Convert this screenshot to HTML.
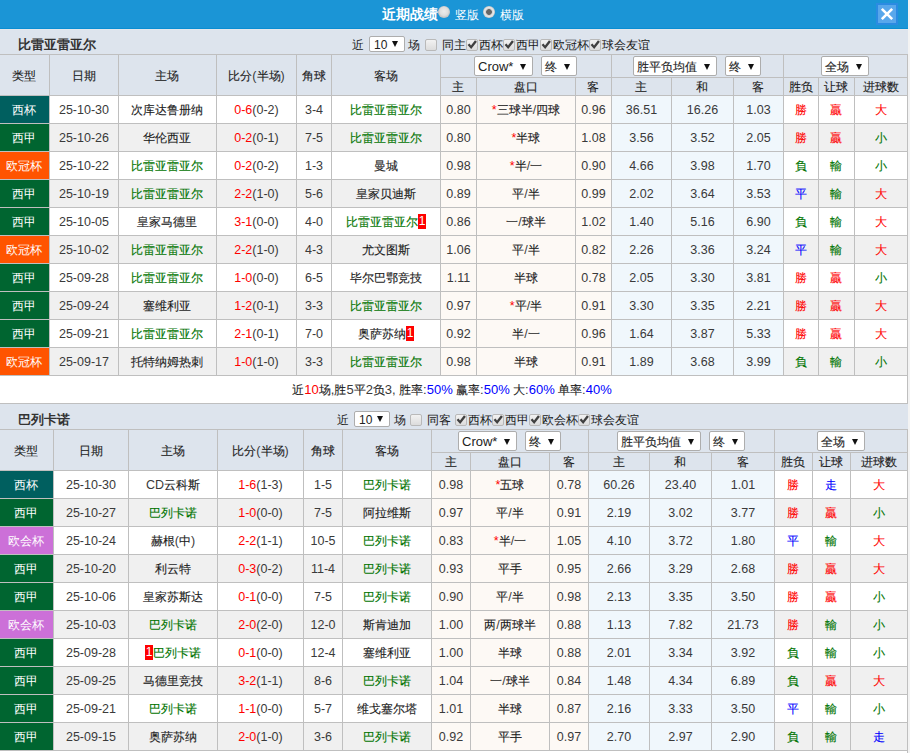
<!DOCTYPE html><html><head><meta charset="utf-8"><title>近期战绩</title><style>
html,body{margin:0;padding:0;}
body{width:910px;height:753px;overflow:hidden;position:relative;background:#f3f3f3;font-family:"Liberation Sans",sans-serif;font-size:12px;color:#333;}
.a{position:absolute;}
.c{position:absolute;text-align:center;white-space:nowrap;overflow:hidden;color:#1c1c1c;}
.z{-webkit-text-stroke:0.12px currentColor;}
.ty .z{-webkit-text-stroke:0;}
.n{font-size:12.5px;}
.c > .n{color:#3a3a3a;}
.sum .n{font-size:13px;}
.sel .n{font-size:13px;}
.t{position:absolute;white-space:nowrap;color:#1a1a1a;}
.sel{position:absolute;background:#fff;border:1px solid #adadad;border-radius:2px;white-space:nowrap;color:#222;font-size:12px;}
.sel .st{position:absolute;left:3px;top:1px;}
.sel .ar{position:absolute;right:6px;top:6.5px;width:0;height:0;border-left:3.5px solid transparent;border-right:3.5px solid transparent;border-top:6px solid #111;}
.s10 .ar{top:4px;}
.s10 .n{font-size:12px;}
.cb{position:absolute;width:10px;height:10px;border:1px solid #b9b9b9;border-radius:2px;background:linear-gradient(#f2f2f2,#dcdcdc);}
.ck{position:absolute;left:0;top:0;}
.rc{display:inline-block;background:#ff0000;color:#fff;width:8px;height:15px;line-height:15px;text-align:center;vertical-align:1px;}
.rc .n{font-size:12px;}

</style></head><body>
<div class="a" style="left:0px;top:0px;width:908px;height:753px;background:#ffffff;">
</div>
<div class="a" style="left:0px;top:0px;width:908px;height:28px;background:#1b95d6;">
</div>
<div class="a" style="left:0px;top:28px;width:908px;height:1px;background:#0a8dd2"></div>
<div class="t" style="left:382px;top:6px;color:#fff;font-weight:bold;font-size:14px;line-height:16px;">近期战绩</div>
<div class="a radio" style="left:438px;top:6px;width:12px;height:12px;border-radius:50%;background:radial-gradient(circle at 50% 45%,#ececec 0,#dedede 4px,#c4c4c4 6px);"></div>
<div class="t" style="left:455px;top:9px;color:#fff;font-size:12px;line-height:13px;">竖版</div>
<div class="a radio" style="left:483px;top:6px;width:12px;height:12px;border-radius:50%;background:radial-gradient(circle,#666 0,#666 2.5px,#d0d0d0 3.2px,#e8e8e8 4.5px,#c4c4c4 6px);"></div>
<div class="t" style="left:500px;top:9px;color:#fff;font-size:12px;line-height:13px;">横版</div>
<div class="a" style="left:876px;top:3px;width:22px;height:22px;background:#2b8be2;">
</div>
<div class="a" style="left:878px;top:5px;width:18px;height:18px;background:#59a7eb;">
</div>
<svg class="a" style="left:876px;top:3px" width="22" height="22" viewBox="0 0 22 22"><path d="M5.8 5.8L16.2 16.2M16.2 5.8L5.8 16.2" stroke="#fff" stroke-width="2.6"/></svg>
<div class="a" style="left:0px;top:29px;width:908px;height:1px;background:#e4e7ec"></div>
<div class="a" style="left:0px;top:30px;width:908px;height:24px;background:#dde4ed;">
</div>
<div class="t" style="left:18px;top:38px;font-weight:bold;font-size:13px;line-height:14px;color:#333;">比雷亚雷亚尔</div>
<div class="t" style="left:352px;top:38px;line-height:14px;">近</div>
<div class="sel s10" style="left:369px;top:36px;width:34px;height:14px;line-height:14px;"><span class="st" style="left:4px">10</span><span class="ar"></span></div>
<div class="t" style="left:408px;top:38px;line-height:14px;">场</div>
<div class="cb" style="left:425px;top:39px;"></div>
<div class="t" style="left:442px;top:38px;line-height:14px;">同主</div>
<div class="cb" style="left:466px;top:39px;"><svg class="ck" width="10" height="10" viewBox="0 0 10 10"><path d="M0.6 5.0 L2.4 3.4 L4.0 5.4 L8.0 0.2 L9.9 1.7 L4.2 9.0 Z" fill="#404040"/></svg></div>
<div class="t" style="left:479px;top:38px;line-height:14px;">西杯</div>
<div class="cb" style="left:503px;top:39px;"><svg class="ck" width="10" height="10" viewBox="0 0 10 10"><path d="M0.6 5.0 L2.4 3.4 L4.0 5.4 L8.0 0.2 L9.9 1.7 L4.2 9.0 Z" fill="#404040"/></svg></div>
<div class="t" style="left:516px;top:38px;line-height:14px;">西甲</div>
<div class="cb" style="left:540px;top:39px;"><svg class="ck" width="10" height="10" viewBox="0 0 10 10"><path d="M0.6 5.0 L2.4 3.4 L4.0 5.4 L8.0 0.2 L9.9 1.7 L4.2 9.0 Z" fill="#404040"/></svg></div>
<div class="t" style="left:553px;top:38px;line-height:14px;">欧冠杯</div>
<div class="cb" style="left:589px;top:39px;"><svg class="ck" width="10" height="10" viewBox="0 0 10 10"><path d="M0.6 5.0 L2.4 3.4 L4.0 5.4 L8.0 0.2 L9.9 1.7 L4.2 9.0 Z" fill="#404040"/></svg></div>
<div class="t" style="left:602px;top:38px;line-height:14px;">球会友谊</div>
<div class="a" style="left:0px;top:54px;width:908px;height:322px;background:#bfbfbf;">
</div>
<div class="c" style="left:0px;top:55px;width:48px;padding-right:1px;height:40px;line-height:42px;background:#dde4ed;"><span class="z">类型</span></div>
<div class="c" style="left:50px;top:55px;width:68px;padding-right:0px;height:40px;line-height:42px;background:#dde4ed;"><span class="z">日期</span></div>
<div class="c" style="left:119px;top:55px;width:96px;padding-right:1px;height:40px;line-height:42px;background:#dde4ed;"><span class="z">主场</span></div>
<div class="c" style="left:217px;top:55px;width:79px;padding-right:0px;height:40px;line-height:42px;background:#dde4ed;"><span class="z">比分</span><span class="n">(</span><span class="z">半场</span><span class="n">)</span></div>
<div class="c" style="left:297px;top:55px;width:34px;padding-right:0px;height:40px;line-height:42px;background:#dde4ed;"><span class="z">角球</span></div>
<div class="c" style="left:332px;top:55px;width:108px;padding-right:0px;height:40px;line-height:42px;background:#dde4ed;"><span class="z">客场</span></div>
<div class="c" style="left:441px;top:55px;width:170px;padding-right:0px;height:22px;line-height:24px;background:#dde4ed;"></div>
<div class="c" style="left:612px;top:55px;width:171px;padding-right:0px;height:22px;line-height:24px;background:#dde4ed;"></div>
<div class="c" style="left:784px;top:55px;width:123px;padding-right:0px;height:22px;line-height:24px;background:#dde4ed;"></div>
<div class="c" style="left:441px;top:78px;width:34px;padding-right:1px;height:17px;line-height:19px;background:#dde4ed;line-height:19px;"><span class="z">主</span></div>
<div class="c" style="left:477px;top:78px;width:98px;padding-right:0px;height:17px;line-height:19px;background:#dde4ed;line-height:19px;"><span class="z">盘口</span></div>
<div class="c" style="left:576px;top:78px;width:34px;padding-right:1px;height:17px;line-height:19px;background:#dde4ed;line-height:19px;"><span class="z">客</span></div>
<div class="c" style="left:612px;top:78px;width:58px;padding-right:1px;height:17px;line-height:19px;background:#dde4ed;line-height:19px;"><span class="z">主</span></div>
<div class="c" style="left:672px;top:78px;width:60px;padding-right:1px;height:17px;line-height:19px;background:#dde4ed;line-height:19px;"><span class="z">和</span></div>
<div class="c" style="left:734px;top:78px;width:48px;padding-right:1px;height:17px;line-height:19px;background:#dde4ed;line-height:19px;"><span class="z">客</span></div>
<div class="c" style="left:784px;top:78px;width:34px;padding-right:0px;height:17px;line-height:19px;background:#dde4ed;line-height:19px;"><span class="z">胜负</span></div>
<div class="c" style="left:819px;top:78px;width:34px;padding-right:1px;height:17px;line-height:19px;background:#dde4ed;line-height:19px;"><span class="z">让球</span></div>
<div class="c" style="left:855px;top:78px;width:52px;padding-right:0px;height:17px;line-height:19px;background:#dde4ed;line-height:19px;"><span class="z">进球数</span></div>
<div class="sel" style="left:474px;top:56px;width:57px;height:18px;line-height:18px;"><span class="st"><span class="n">Crow*</span></span><span class="ar"></span></div>
<div class="sel" style="left:541px;top:56px;width:34px;height:18px;line-height:18px;"><span class="st"><span class="z">终</span></span><span class="ar"></span></div>
<div class="sel" style="left:633px;top:56px;width:82px;height:18px;line-height:18px;"><span class="st"><span class="z">胜平负均值</span></span><span class="ar"></span></div>
<div class="sel" style="left:725px;top:56px;width:34px;height:18px;line-height:18px;"><span class="st"><span class="z">终</span></span><span class="ar"></span></div>
<div class="sel" style="left:821px;top:56px;width:46px;height:18px;line-height:18px;"><span class="st"><span class="z">全场</span></span><span class="ar"></span></div>
<div class="c ty" style="left:0px;top:96px;width:48px;padding-right:1px;height:27px;line-height:29px;background:#005f5f;color:#ffffff;"><span class="z">西杯</span></div>
<div class="c" style="left:50px;top:96px;width:68px;padding-right:0px;height:27px;line-height:29px;background:#ffffff;"><span class="n">25-10-30</span></div>
<div class="c" style="left:119px;top:96px;width:96px;padding-right:1px;height:27px;line-height:29px;background:#ffffff;"><span class="z">次库达鲁册纳</span></div>
<div class="c" style="left:217px;top:96px;width:79px;padding-right:0px;height:27px;line-height:29px;background:#ffffff;"><span style="color:#ff0000"><span class="n">0-6</span></span><span class="n">(0-2)</span></div>
<div class="c" style="left:297px;top:96px;width:34px;padding-right:0px;height:27px;line-height:29px;background:#ffffff;"><span class="n">3-4</span></div>
<div class="c" style="left:332px;top:96px;width:108px;padding-right:0px;height:27px;line-height:29px;background:#ffffff;"><span style="color:#007400"><span class="z">比雷亚雷亚尔</span></span></div>
<div class="c" style="left:441px;top:96px;width:35px;padding-right:0px;height:27px;line-height:29px;background:#fdf9f5;"><span class="n">0.80</span></div>
<div class="c" style="left:477px;top:96px;width:98px;padding-right:0px;height:27px;line-height:29px;background:#fdf9f5;"><span style="color:#ff0000"><span class="n">*</span></span><span class="z">三球半</span><span class="n">/</span><span class="z">四球</span></div>
<div class="c" style="left:576px;top:96px;width:35px;padding-right:0px;height:27px;line-height:29px;background:#fdf9f5;"><span class="n">0.96</span></div>
<div class="c" style="left:612px;top:96px;width:59px;padding-right:0px;height:27px;line-height:29px;background:#f0f7fc;"><span class="n">36.51</span></div>
<div class="c" style="left:672px;top:96px;width:61px;padding-right:0px;height:27px;line-height:29px;background:#f0f7fc;"><span class="n">16.26</span></div>
<div class="c" style="left:734px;top:96px;width:49px;padding-right:0px;height:27px;line-height:29px;background:#f0f7fc;"><span class="n">1.03</span></div>
<div class="c" style="left:784px;top:96px;width:34px;padding-right:0px;height:27px;line-height:29px;background:#ffffff;color:#ff0000;-webkit-text-stroke:0.15px currentColor;"><span class="z">勝</span></div>
<div class="c" style="left:819px;top:96px;width:34px;padding-right:1px;height:27px;line-height:29px;background:#ffffff;color:#ff0000;-webkit-text-stroke:0.15px currentColor;"><span class="z">贏</span></div>
<div class="c" style="left:855px;top:96px;width:52px;padding-right:0px;height:27px;line-height:29px;background:#ffffff;color:#ff0000;-webkit-text-stroke:0.15px currentColor;"><span class="z">大</span></div>
<div class="c ty" style="left:0px;top:124px;width:48px;padding-right:1px;height:27px;line-height:29px;background:#006530;color:#ffffff;"><span class="z">西甲</span></div>
<div class="c" style="left:50px;top:124px;width:68px;padding-right:0px;height:27px;line-height:29px;background:#f0f0f0;"><span class="n">25-10-26</span></div>
<div class="c" style="left:119px;top:124px;width:96px;padding-right:1px;height:27px;line-height:29px;background:#f0f0f0;"><span class="z">华伦西亚</span></div>
<div class="c" style="left:217px;top:124px;width:79px;padding-right:0px;height:27px;line-height:29px;background:#f0f0f0;"><span style="color:#ff0000"><span class="n">0-2</span></span><span class="n">(0-1)</span></div>
<div class="c" style="left:297px;top:124px;width:34px;padding-right:0px;height:27px;line-height:29px;background:#f0f0f0;"><span class="n">7-5</span></div>
<div class="c" style="left:332px;top:124px;width:108px;padding-right:0px;height:27px;line-height:29px;background:#f0f0f0;"><span style="color:#007400"><span class="z">比雷亚雷亚尔</span></span></div>
<div class="c" style="left:441px;top:124px;width:35px;padding-right:0px;height:27px;line-height:29px;background:#fdf9f5;"><span class="n">0.80</span></div>
<div class="c" style="left:477px;top:124px;width:98px;padding-right:0px;height:27px;line-height:29px;background:#fdf9f5;"><span style="color:#ff0000"><span class="n">*</span></span><span class="z">半球</span></div>
<div class="c" style="left:576px;top:124px;width:35px;padding-right:0px;height:27px;line-height:29px;background:#fdf9f5;"><span class="n">1.08</span></div>
<div class="c" style="left:612px;top:124px;width:59px;padding-right:0px;height:27px;line-height:29px;background:#f0f7fc;"><span class="n">3.56</span></div>
<div class="c" style="left:672px;top:124px;width:61px;padding-right:0px;height:27px;line-height:29px;background:#f0f7fc;"><span class="n">3.52</span></div>
<div class="c" style="left:734px;top:124px;width:49px;padding-right:0px;height:27px;line-height:29px;background:#f0f7fc;"><span class="n">2.05</span></div>
<div class="c" style="left:784px;top:124px;width:34px;padding-right:0px;height:27px;line-height:29px;background:#f0f0f0;color:#ff0000;-webkit-text-stroke:0.15px currentColor;"><span class="z">勝</span></div>
<div class="c" style="left:819px;top:124px;width:34px;padding-right:1px;height:27px;line-height:29px;background:#f0f0f0;color:#ff0000;-webkit-text-stroke:0.15px currentColor;"><span class="z">贏</span></div>
<div class="c" style="left:855px;top:124px;width:52px;padding-right:0px;height:27px;line-height:29px;background:#f0f0f0;color:#007400;-webkit-text-stroke:0.15px currentColor;"><span class="z">小</span></div>
<div class="c ty" style="left:0px;top:152px;width:48px;padding-right:1px;height:27px;line-height:29px;background:#ff5400;color:#ffffff;"><span class="z">欧冠杯</span></div>
<div class="c" style="left:50px;top:152px;width:68px;padding-right:0px;height:27px;line-height:29px;background:#ffffff;"><span class="n">25-10-22</span></div>
<div class="c" style="left:119px;top:152px;width:96px;padding-right:1px;height:27px;line-height:29px;background:#ffffff;"><span style="color:#007400"><span class="z">比雷亚雷亚尔</span></span></div>
<div class="c" style="left:217px;top:152px;width:79px;padding-right:0px;height:27px;line-height:29px;background:#ffffff;"><span style="color:#ff0000"><span class="n">0-2</span></span><span class="n">(0-2)</span></div>
<div class="c" style="left:297px;top:152px;width:34px;padding-right:0px;height:27px;line-height:29px;background:#ffffff;"><span class="n">1-3</span></div>
<div class="c" style="left:332px;top:152px;width:108px;padding-right:0px;height:27px;line-height:29px;background:#ffffff;"><span class="z">曼城</span></div>
<div class="c" style="left:441px;top:152px;width:35px;padding-right:0px;height:27px;line-height:29px;background:#fdf9f5;"><span class="n">0.98</span></div>
<div class="c" style="left:477px;top:152px;width:98px;padding-right:0px;height:27px;line-height:29px;background:#fdf9f5;"><span style="color:#ff0000"><span class="n">*</span></span><span class="z">半</span><span class="n">/</span><span class="z">一</span></div>
<div class="c" style="left:576px;top:152px;width:35px;padding-right:0px;height:27px;line-height:29px;background:#fdf9f5;"><span class="n">0.90</span></div>
<div class="c" style="left:612px;top:152px;width:59px;padding-right:0px;height:27px;line-height:29px;background:#f0f7fc;"><span class="n">4.66</span></div>
<div class="c" style="left:672px;top:152px;width:61px;padding-right:0px;height:27px;line-height:29px;background:#f0f7fc;"><span class="n">3.98</span></div>
<div class="c" style="left:734px;top:152px;width:49px;padding-right:0px;height:27px;line-height:29px;background:#f0f7fc;"><span class="n">1.70</span></div>
<div class="c" style="left:784px;top:152px;width:34px;padding-right:0px;height:27px;line-height:29px;background:#ffffff;color:#007400;-webkit-text-stroke:0.15px currentColor;"><span class="z">負</span></div>
<div class="c" style="left:819px;top:152px;width:34px;padding-right:1px;height:27px;line-height:29px;background:#ffffff;color:#007400;-webkit-text-stroke:0.15px currentColor;"><span class="z">輸</span></div>
<div class="c" style="left:855px;top:152px;width:52px;padding-right:0px;height:27px;line-height:29px;background:#ffffff;color:#007400;-webkit-text-stroke:0.15px currentColor;"><span class="z">小</span></div>
<div class="c ty" style="left:0px;top:180px;width:48px;padding-right:1px;height:27px;line-height:29px;background:#006530;color:#ffffff;"><span class="z">西甲</span></div>
<div class="c" style="left:50px;top:180px;width:68px;padding-right:0px;height:27px;line-height:29px;background:#f0f0f0;"><span class="n">25-10-19</span></div>
<div class="c" style="left:119px;top:180px;width:96px;padding-right:1px;height:27px;line-height:29px;background:#f0f0f0;"><span style="color:#007400"><span class="z">比雷亚雷亚尔</span></span></div>
<div class="c" style="left:217px;top:180px;width:79px;padding-right:0px;height:27px;line-height:29px;background:#f0f0f0;"><span style="color:#ff0000"><span class="n">2-2</span></span><span class="n">(1-0)</span></div>
<div class="c" style="left:297px;top:180px;width:34px;padding-right:0px;height:27px;line-height:29px;background:#f0f0f0;"><span class="n">5-6</span></div>
<div class="c" style="left:332px;top:180px;width:108px;padding-right:0px;height:27px;line-height:29px;background:#f0f0f0;"><span class="z">皇家贝迪斯</span></div>
<div class="c" style="left:441px;top:180px;width:35px;padding-right:0px;height:27px;line-height:29px;background:#fdf9f5;"><span class="n">0.89</span></div>
<div class="c" style="left:477px;top:180px;width:98px;padding-right:0px;height:27px;line-height:29px;background:#fdf9f5;"><span class="z">平</span><span class="n">/</span><span class="z">半</span></div>
<div class="c" style="left:576px;top:180px;width:35px;padding-right:0px;height:27px;line-height:29px;background:#fdf9f5;"><span class="n">0.99</span></div>
<div class="c" style="left:612px;top:180px;width:59px;padding-right:0px;height:27px;line-height:29px;background:#f0f7fc;"><span class="n">2.02</span></div>
<div class="c" style="left:672px;top:180px;width:61px;padding-right:0px;height:27px;line-height:29px;background:#f0f7fc;"><span class="n">3.64</span></div>
<div class="c" style="left:734px;top:180px;width:49px;padding-right:0px;height:27px;line-height:29px;background:#f0f7fc;"><span class="n">3.53</span></div>
<div class="c" style="left:784px;top:180px;width:34px;padding-right:0px;height:27px;line-height:29px;background:#f0f0f0;color:#0000ff;-webkit-text-stroke:0.15px currentColor;"><span class="z">平</span></div>
<div class="c" style="left:819px;top:180px;width:34px;padding-right:1px;height:27px;line-height:29px;background:#f0f0f0;color:#007400;-webkit-text-stroke:0.15px currentColor;"><span class="z">輸</span></div>
<div class="c" style="left:855px;top:180px;width:52px;padding-right:0px;height:27px;line-height:29px;background:#f0f0f0;color:#ff0000;-webkit-text-stroke:0.15px currentColor;"><span class="z">大</span></div>
<div class="c ty" style="left:0px;top:208px;width:48px;padding-right:1px;height:27px;line-height:29px;background:#006530;color:#ffffff;"><span class="z">西甲</span></div>
<div class="c" style="left:50px;top:208px;width:68px;padding-right:0px;height:27px;line-height:29px;background:#ffffff;"><span class="n">25-10-05</span></div>
<div class="c" style="left:119px;top:208px;width:96px;padding-right:1px;height:27px;line-height:29px;background:#ffffff;"><span class="z">皇家马德里</span></div>
<div class="c" style="left:217px;top:208px;width:79px;padding-right:0px;height:27px;line-height:29px;background:#ffffff;"><span style="color:#ff0000"><span class="n">3-1</span></span><span class="n">(0-0)</span></div>
<div class="c" style="left:297px;top:208px;width:34px;padding-right:0px;height:27px;line-height:29px;background:#ffffff;"><span class="n">4-0</span></div>
<div class="c" style="left:332px;top:208px;width:108px;padding-right:0px;height:27px;line-height:29px;background:#ffffff;"><span style="color:#007400"><span class="z">比雷亚雷亚尔</span></span><span class="rc"><span class="n">1</span></span></div>
<div class="c" style="left:441px;top:208px;width:35px;padding-right:0px;height:27px;line-height:29px;background:#fdf9f5;"><span class="n">0.86</span></div>
<div class="c" style="left:477px;top:208px;width:98px;padding-right:0px;height:27px;line-height:29px;background:#fdf9f5;"><span class="z">一</span><span class="n">/</span><span class="z">球半</span></div>
<div class="c" style="left:576px;top:208px;width:35px;padding-right:0px;height:27px;line-height:29px;background:#fdf9f5;"><span class="n">1.02</span></div>
<div class="c" style="left:612px;top:208px;width:59px;padding-right:0px;height:27px;line-height:29px;background:#f0f7fc;"><span class="n">1.40</span></div>
<div class="c" style="left:672px;top:208px;width:61px;padding-right:0px;height:27px;line-height:29px;background:#f0f7fc;"><span class="n">5.16</span></div>
<div class="c" style="left:734px;top:208px;width:49px;padding-right:0px;height:27px;line-height:29px;background:#f0f7fc;"><span class="n">6.90</span></div>
<div class="c" style="left:784px;top:208px;width:34px;padding-right:0px;height:27px;line-height:29px;background:#ffffff;color:#007400;-webkit-text-stroke:0.15px currentColor;"><span class="z">負</span></div>
<div class="c" style="left:819px;top:208px;width:34px;padding-right:1px;height:27px;line-height:29px;background:#ffffff;color:#007400;-webkit-text-stroke:0.15px currentColor;"><span class="z">輸</span></div>
<div class="c" style="left:855px;top:208px;width:52px;padding-right:0px;height:27px;line-height:29px;background:#ffffff;color:#ff0000;-webkit-text-stroke:0.15px currentColor;"><span class="z">大</span></div>
<div class="c ty" style="left:0px;top:236px;width:48px;padding-right:1px;height:27px;line-height:29px;background:#ff5400;color:#ffffff;"><span class="z">欧冠杯</span></div>
<div class="c" style="left:50px;top:236px;width:68px;padding-right:0px;height:27px;line-height:29px;background:#f0f0f0;"><span class="n">25-10-02</span></div>
<div class="c" style="left:119px;top:236px;width:96px;padding-right:1px;height:27px;line-height:29px;background:#f0f0f0;"><span style="color:#007400"><span class="z">比雷亚雷亚尔</span></span></div>
<div class="c" style="left:217px;top:236px;width:79px;padding-right:0px;height:27px;line-height:29px;background:#f0f0f0;"><span style="color:#ff0000"><span class="n">2-2</span></span><span class="n">(1-0)</span></div>
<div class="c" style="left:297px;top:236px;width:34px;padding-right:0px;height:27px;line-height:29px;background:#f0f0f0;"><span class="n">4-3</span></div>
<div class="c" style="left:332px;top:236px;width:108px;padding-right:0px;height:27px;line-height:29px;background:#f0f0f0;"><span class="z">尤文图斯</span></div>
<div class="c" style="left:441px;top:236px;width:35px;padding-right:0px;height:27px;line-height:29px;background:#fdf9f5;"><span class="n">1.06</span></div>
<div class="c" style="left:477px;top:236px;width:98px;padding-right:0px;height:27px;line-height:29px;background:#fdf9f5;"><span class="z">平</span><span class="n">/</span><span class="z">半</span></div>
<div class="c" style="left:576px;top:236px;width:35px;padding-right:0px;height:27px;line-height:29px;background:#fdf9f5;"><span class="n">0.82</span></div>
<div class="c" style="left:612px;top:236px;width:59px;padding-right:0px;height:27px;line-height:29px;background:#f0f7fc;"><span class="n">2.26</span></div>
<div class="c" style="left:672px;top:236px;width:61px;padding-right:0px;height:27px;line-height:29px;background:#f0f7fc;"><span class="n">3.36</span></div>
<div class="c" style="left:734px;top:236px;width:49px;padding-right:0px;height:27px;line-height:29px;background:#f0f7fc;"><span class="n">3.24</span></div>
<div class="c" style="left:784px;top:236px;width:34px;padding-right:0px;height:27px;line-height:29px;background:#f0f0f0;color:#0000ff;-webkit-text-stroke:0.15px currentColor;"><span class="z">平</span></div>
<div class="c" style="left:819px;top:236px;width:34px;padding-right:1px;height:27px;line-height:29px;background:#f0f0f0;color:#007400;-webkit-text-stroke:0.15px currentColor;"><span class="z">輸</span></div>
<div class="c" style="left:855px;top:236px;width:52px;padding-right:0px;height:27px;line-height:29px;background:#f0f0f0;color:#ff0000;-webkit-text-stroke:0.15px currentColor;"><span class="z">大</span></div>
<div class="c ty" style="left:0px;top:264px;width:48px;padding-right:1px;height:27px;line-height:29px;background:#006530;color:#ffffff;"><span class="z">西甲</span></div>
<div class="c" style="left:50px;top:264px;width:68px;padding-right:0px;height:27px;line-height:29px;background:#ffffff;"><span class="n">25-09-28</span></div>
<div class="c" style="left:119px;top:264px;width:96px;padding-right:1px;height:27px;line-height:29px;background:#ffffff;"><span style="color:#007400"><span class="z">比雷亚雷亚尔</span></span></div>
<div class="c" style="left:217px;top:264px;width:79px;padding-right:0px;height:27px;line-height:29px;background:#ffffff;"><span style="color:#ff0000"><span class="n">1-0</span></span><span class="n">(0-0)</span></div>
<div class="c" style="left:297px;top:264px;width:34px;padding-right:0px;height:27px;line-height:29px;background:#ffffff;"><span class="n">6-5</span></div>
<div class="c" style="left:332px;top:264px;width:108px;padding-right:0px;height:27px;line-height:29px;background:#ffffff;"><span class="z">毕尔巴鄂竞技</span></div>
<div class="c" style="left:441px;top:264px;width:35px;padding-right:0px;height:27px;line-height:29px;background:#fdf9f5;"><span class="n">1.11</span></div>
<div class="c" style="left:477px;top:264px;width:98px;padding-right:0px;height:27px;line-height:29px;background:#fdf9f5;"><span class="z">半球</span></div>
<div class="c" style="left:576px;top:264px;width:35px;padding-right:0px;height:27px;line-height:29px;background:#fdf9f5;"><span class="n">0.78</span></div>
<div class="c" style="left:612px;top:264px;width:59px;padding-right:0px;height:27px;line-height:29px;background:#f0f7fc;"><span class="n">2.05</span></div>
<div class="c" style="left:672px;top:264px;width:61px;padding-right:0px;height:27px;line-height:29px;background:#f0f7fc;"><span class="n">3.30</span></div>
<div class="c" style="left:734px;top:264px;width:49px;padding-right:0px;height:27px;line-height:29px;background:#f0f7fc;"><span class="n">3.81</span></div>
<div class="c" style="left:784px;top:264px;width:34px;padding-right:0px;height:27px;line-height:29px;background:#ffffff;color:#ff0000;-webkit-text-stroke:0.15px currentColor;"><span class="z">勝</span></div>
<div class="c" style="left:819px;top:264px;width:34px;padding-right:1px;height:27px;line-height:29px;background:#ffffff;color:#ff0000;-webkit-text-stroke:0.15px currentColor;"><span class="z">贏</span></div>
<div class="c" style="left:855px;top:264px;width:52px;padding-right:0px;height:27px;line-height:29px;background:#ffffff;color:#007400;-webkit-text-stroke:0.15px currentColor;"><span class="z">小</span></div>
<div class="c ty" style="left:0px;top:292px;width:48px;padding-right:1px;height:27px;line-height:29px;background:#006530;color:#ffffff;"><span class="z">西甲</span></div>
<div class="c" style="left:50px;top:292px;width:68px;padding-right:0px;height:27px;line-height:29px;background:#f0f0f0;"><span class="n">25-09-24</span></div>
<div class="c" style="left:119px;top:292px;width:96px;padding-right:1px;height:27px;line-height:29px;background:#f0f0f0;"><span class="z">塞维利亚</span></div>
<div class="c" style="left:217px;top:292px;width:79px;padding-right:0px;height:27px;line-height:29px;background:#f0f0f0;"><span style="color:#ff0000"><span class="n">1-2</span></span><span class="n">(0-1)</span></div>
<div class="c" style="left:297px;top:292px;width:34px;padding-right:0px;height:27px;line-height:29px;background:#f0f0f0;"><span class="n">3-3</span></div>
<div class="c" style="left:332px;top:292px;width:108px;padding-right:0px;height:27px;line-height:29px;background:#f0f0f0;"><span style="color:#007400"><span class="z">比雷亚雷亚尔</span></span></div>
<div class="c" style="left:441px;top:292px;width:35px;padding-right:0px;height:27px;line-height:29px;background:#fdf9f5;"><span class="n">0.97</span></div>
<div class="c" style="left:477px;top:292px;width:98px;padding-right:0px;height:27px;line-height:29px;background:#fdf9f5;"><span style="color:#ff0000"><span class="n">*</span></span><span class="z">平</span><span class="n">/</span><span class="z">半</span></div>
<div class="c" style="left:576px;top:292px;width:35px;padding-right:0px;height:27px;line-height:29px;background:#fdf9f5;"><span class="n">0.91</span></div>
<div class="c" style="left:612px;top:292px;width:59px;padding-right:0px;height:27px;line-height:29px;background:#f0f7fc;"><span class="n">3.30</span></div>
<div class="c" style="left:672px;top:292px;width:61px;padding-right:0px;height:27px;line-height:29px;background:#f0f7fc;"><span class="n">3.35</span></div>
<div class="c" style="left:734px;top:292px;width:49px;padding-right:0px;height:27px;line-height:29px;background:#f0f7fc;"><span class="n">2.21</span></div>
<div class="c" style="left:784px;top:292px;width:34px;padding-right:0px;height:27px;line-height:29px;background:#f0f0f0;color:#ff0000;-webkit-text-stroke:0.15px currentColor;"><span class="z">勝</span></div>
<div class="c" style="left:819px;top:292px;width:34px;padding-right:1px;height:27px;line-height:29px;background:#f0f0f0;color:#ff0000;-webkit-text-stroke:0.15px currentColor;"><span class="z">贏</span></div>
<div class="c" style="left:855px;top:292px;width:52px;padding-right:0px;height:27px;line-height:29px;background:#f0f0f0;color:#ff0000;-webkit-text-stroke:0.15px currentColor;"><span class="z">大</span></div>
<div class="c ty" style="left:0px;top:320px;width:48px;padding-right:1px;height:27px;line-height:29px;background:#006530;color:#ffffff;"><span class="z">西甲</span></div>
<div class="c" style="left:50px;top:320px;width:68px;padding-right:0px;height:27px;line-height:29px;background:#ffffff;"><span class="n">25-09-21</span></div>
<div class="c" style="left:119px;top:320px;width:96px;padding-right:1px;height:27px;line-height:29px;background:#ffffff;"><span style="color:#007400"><span class="z">比雷亚雷亚尔</span></span></div>
<div class="c" style="left:217px;top:320px;width:79px;padding-right:0px;height:27px;line-height:29px;background:#ffffff;"><span style="color:#ff0000"><span class="n">2-1</span></span><span class="n">(0-1)</span></div>
<div class="c" style="left:297px;top:320px;width:34px;padding-right:0px;height:27px;line-height:29px;background:#ffffff;"><span class="n">7-0</span></div>
<div class="c" style="left:332px;top:320px;width:108px;padding-right:0px;height:27px;line-height:29px;background:#ffffff;"><span class="z">奥萨苏纳</span><span class="rc"><span class="n">1</span></span></div>
<div class="c" style="left:441px;top:320px;width:35px;padding-right:0px;height:27px;line-height:29px;background:#fdf9f5;"><span class="n">0.92</span></div>
<div class="c" style="left:477px;top:320px;width:98px;padding-right:0px;height:27px;line-height:29px;background:#fdf9f5;"><span class="z">半</span><span class="n">/</span><span class="z">一</span></div>
<div class="c" style="left:576px;top:320px;width:35px;padding-right:0px;height:27px;line-height:29px;background:#fdf9f5;"><span class="n">0.96</span></div>
<div class="c" style="left:612px;top:320px;width:59px;padding-right:0px;height:27px;line-height:29px;background:#f0f7fc;"><span class="n">1.64</span></div>
<div class="c" style="left:672px;top:320px;width:61px;padding-right:0px;height:27px;line-height:29px;background:#f0f7fc;"><span class="n">3.87</span></div>
<div class="c" style="left:734px;top:320px;width:49px;padding-right:0px;height:27px;line-height:29px;background:#f0f7fc;"><span class="n">5.33</span></div>
<div class="c" style="left:784px;top:320px;width:34px;padding-right:0px;height:27px;line-height:29px;background:#ffffff;color:#ff0000;-webkit-text-stroke:0.15px currentColor;"><span class="z">勝</span></div>
<div class="c" style="left:819px;top:320px;width:34px;padding-right:1px;height:27px;line-height:29px;background:#ffffff;color:#ff0000;-webkit-text-stroke:0.15px currentColor;"><span class="z">贏</span></div>
<div class="c" style="left:855px;top:320px;width:52px;padding-right:0px;height:27px;line-height:29px;background:#ffffff;color:#ff0000;-webkit-text-stroke:0.15px currentColor;"><span class="z">大</span></div>
<div class="c ty" style="left:0px;top:348px;width:48px;padding-right:1px;height:27px;line-height:29px;background:#ff5400;color:#ffffff;"><span class="z">欧冠杯</span></div>
<div class="c" style="left:50px;top:348px;width:68px;padding-right:0px;height:27px;line-height:29px;background:#f0f0f0;"><span class="n">25-09-17</span></div>
<div class="c" style="left:119px;top:348px;width:96px;padding-right:1px;height:27px;line-height:29px;background:#f0f0f0;"><span class="z">托特纳姆热刺</span></div>
<div class="c" style="left:217px;top:348px;width:79px;padding-right:0px;height:27px;line-height:29px;background:#f0f0f0;"><span style="color:#ff0000"><span class="n">1-0</span></span><span class="n">(1-0)</span></div>
<div class="c" style="left:297px;top:348px;width:34px;padding-right:0px;height:27px;line-height:29px;background:#f0f0f0;"><span class="n">3-3</span></div>
<div class="c" style="left:332px;top:348px;width:108px;padding-right:0px;height:27px;line-height:29px;background:#f0f0f0;"><span style="color:#007400"><span class="z">比雷亚雷亚尔</span></span></div>
<div class="c" style="left:441px;top:348px;width:35px;padding-right:0px;height:27px;line-height:29px;background:#fdf9f5;"><span class="n">0.98</span></div>
<div class="c" style="left:477px;top:348px;width:98px;padding-right:0px;height:27px;line-height:29px;background:#fdf9f5;"><span class="z">半球</span></div>
<div class="c" style="left:576px;top:348px;width:35px;padding-right:0px;height:27px;line-height:29px;background:#fdf9f5;"><span class="n">0.91</span></div>
<div class="c" style="left:612px;top:348px;width:59px;padding-right:0px;height:27px;line-height:29px;background:#f0f7fc;"><span class="n">1.89</span></div>
<div class="c" style="left:672px;top:348px;width:61px;padding-right:0px;height:27px;line-height:29px;background:#f0f7fc;"><span class="n">3.68</span></div>
<div class="c" style="left:734px;top:348px;width:49px;padding-right:0px;height:27px;line-height:29px;background:#f0f7fc;"><span class="n">3.99</span></div>
<div class="c" style="left:784px;top:348px;width:34px;padding-right:0px;height:27px;line-height:29px;background:#f0f0f0;color:#007400;-webkit-text-stroke:0.15px currentColor;"><span class="z">負</span></div>
<div class="c" style="left:819px;top:348px;width:34px;padding-right:1px;height:27px;line-height:29px;background:#f0f0f0;color:#007400;-webkit-text-stroke:0.15px currentColor;"><span class="z">輸</span></div>
<div class="c" style="left:855px;top:348px;width:52px;padding-right:0px;height:27px;line-height:29px;background:#f0f0f0;color:#007400;-webkit-text-stroke:0.15px currentColor;"><span class="z">小</span></div>
<div class="a" style="left:0px;top:375px;width:908px;height:29px;background:#bfbfbf;">
</div>
<div class="a" style="left:0px;top:376px;width:907px;height:27px;background:#ffffff;">
</div>
<div class="c sum" style="left:0;top:376px;width:904px;height:27px;line-height:28px;"><span class="z">近</span><span style="color:#f00"><span class="n">10</span></span><span class="z">场</span><span class="n">,</span><span class="z">胜</span><span class="n">5</span><span class="z">平</span><span class="n">2</span><span class="z">负</span><span class="n">3,</span> <span class="z">胜率</span><span class="n">:</span><span style="color:#00f"><span class="n">50%</span></span> <span class="z">赢率</span><span class="n">:</span><span style="color:#00f"><span class="n">50%</span></span> <span class="z">大</span><span class="n">:</span><span style="color:#00f"><span class="n">60%</span></span> <span class="z">单率</span><span class="n">:</span><span style="color:#00f"><span class="n">40%</span></span></div>
<div class="a" style="left:0px;top:404px;width:908px;height:25px;background:#dde4ed;">
</div>
<div class="t" style="left:18px;top:413px;font-weight:bold;font-size:13px;line-height:14px;color:#333;">巴列卡诺</div>
<div class="t" style="left:337px;top:413px;line-height:14px;">近</div>
<div class="sel s10" style="left:354px;top:411px;width:34px;height:14px;line-height:14px;"><span class="st" style="left:4px">10</span><span class="ar"></span></div>
<div class="t" style="left:394px;top:413px;line-height:14px;">场</div>
<div class="cb" style="left:410px;top:414px;"></div>
<div class="t" style="left:427px;top:413px;line-height:14px;">同客</div>
<div class="cb" style="left:455px;top:414px;"><svg class="ck" width="10" height="10" viewBox="0 0 10 10"><path d="M0.6 5.0 L2.4 3.4 L4.0 5.4 L8.0 0.2 L9.9 1.7 L4.2 9.0 Z" fill="#404040"/></svg></div>
<div class="t" style="left:468px;top:413px;line-height:14px;">西杯</div>
<div class="cb" style="left:492px;top:414px;"><svg class="ck" width="10" height="10" viewBox="0 0 10 10"><path d="M0.6 5.0 L2.4 3.4 L4.0 5.4 L8.0 0.2 L9.9 1.7 L4.2 9.0 Z" fill="#404040"/></svg></div>
<div class="t" style="left:505px;top:413px;line-height:14px;">西甲</div>
<div class="cb" style="left:529px;top:414px;"><svg class="ck" width="10" height="10" viewBox="0 0 10 10"><path d="M0.6 5.0 L2.4 3.4 L4.0 5.4 L8.0 0.2 L9.9 1.7 L4.2 9.0 Z" fill="#404040"/></svg></div>
<div class="t" style="left:542px;top:413px;line-height:14px;">欧会杯</div>
<div class="cb" style="left:578px;top:414px;"><svg class="ck" width="10" height="10" viewBox="0 0 10 10"><path d="M0.6 5.0 L2.4 3.4 L4.0 5.4 L8.0 0.2 L9.9 1.7 L4.2 9.0 Z" fill="#404040"/></svg></div>
<div class="t" style="left:591px;top:413px;line-height:14px;">球会友谊</div>
<div class="a" style="left:0px;top:429px;width:908px;height:322px;background:#bfbfbf;">
</div>
<div class="c" style="left:0px;top:430px;width:52px;padding-right:1px;height:40px;line-height:42px;background:#dde4ed;"><span class="z">类型</span></div>
<div class="c" style="left:54px;top:430px;width:74px;padding-right:0px;height:40px;line-height:42px;background:#dde4ed;"><span class="z">日期</span></div>
<div class="c" style="left:129px;top:430px;width:88px;padding-right:0px;height:40px;line-height:42px;background:#dde4ed;"><span class="z">主场</span></div>
<div class="c" style="left:218px;top:430px;width:85px;padding-right:0px;height:40px;line-height:42px;background:#dde4ed;"><span class="z">比分</span><span class="n">(</span><span class="z">半场</span><span class="n">)</span></div>
<div class="c" style="left:304px;top:430px;width:38px;padding-right:0px;height:40px;line-height:42px;background:#dde4ed;"><span class="z">角球</span></div>
<div class="c" style="left:343px;top:430px;width:88px;padding-right:0px;height:40px;line-height:42px;background:#dde4ed;"><span class="z">客场</span></div>
<div class="c" style="left:432px;top:430px;width:156px;padding-right:0px;height:22px;line-height:24px;background:#dde4ed;"></div>
<div class="c" style="left:589px;top:430px;width:185px;padding-right:0px;height:22px;line-height:24px;background:#dde4ed;"></div>
<div class="c" style="left:775px;top:430px;width:132px;padding-right:0px;height:22px;line-height:24px;background:#dde4ed;"></div>
<div class="c" style="left:432px;top:453px;width:38px;padding-right:0px;height:17px;line-height:19px;background:#dde4ed;line-height:19px;"><span class="z">主</span></div>
<div class="c" style="left:471px;top:453px;width:78px;padding-right:0px;height:17px;line-height:19px;background:#dde4ed;line-height:19px;"><span class="z">盘口</span></div>
<div class="c" style="left:550px;top:453px;width:38px;padding-right:0px;height:17px;line-height:19px;background:#dde4ed;line-height:19px;"><span class="z">客</span></div>
<div class="c" style="left:589px;top:453px;width:60px;padding-right:0px;height:17px;line-height:19px;background:#dde4ed;line-height:19px;"><span class="z">主</span></div>
<div class="c" style="left:650px;top:453px;width:60px;padding-right:1px;height:17px;line-height:19px;background:#dde4ed;line-height:19px;"><span class="z">和</span></div>
<div class="c" style="left:712px;top:453px;width:62px;padding-right:0px;height:17px;line-height:19px;background:#dde4ed;line-height:19px;"><span class="z">客</span></div>
<div class="c" style="left:775px;top:453px;width:36px;padding-right:1px;height:17px;line-height:19px;background:#dde4ed;line-height:19px;"><span class="z">胜负</span></div>
<div class="c" style="left:813px;top:453px;width:36px;padding-right:1px;height:17px;line-height:19px;background:#dde4ed;line-height:19px;"><span class="z">让球</span></div>
<div class="c" style="left:851px;top:453px;width:56px;padding-right:0px;height:17px;line-height:19px;background:#dde4ed;line-height:19px;"><span class="z">进球数</span></div>
<div class="sel" style="left:458px;top:431px;width:57px;height:18px;line-height:18px;"><span class="st"><span class="n">Crow*</span></span><span class="ar"></span></div>
<div class="sel" style="left:525px;top:431px;width:34px;height:18px;line-height:18px;"><span class="st"><span class="z">终</span></span><span class="ar"></span></div>
<div class="sel" style="left:617px;top:431px;width:82px;height:18px;line-height:18px;"><span class="st"><span class="z">胜平负均值</span></span><span class="ar"></span></div>
<div class="sel" style="left:709px;top:431px;width:34px;height:18px;line-height:18px;"><span class="st"><span class="z">终</span></span><span class="ar"></span></div>
<div class="sel" style="left:817px;top:431px;width:46px;height:18px;line-height:18px;"><span class="st"><span class="z">全场</span></span><span class="ar"></span></div>
<div class="c ty" style="left:0px;top:471px;width:52px;padding-right:1px;height:27px;line-height:29px;background:#005f5f;color:#ffffff;"><span class="z">西杯</span></div>
<div class="c" style="left:54px;top:471px;width:74px;padding-right:0px;height:27px;line-height:29px;background:#ffffff;"><span class="n">25-10-30</span></div>
<div class="c" style="left:129px;top:471px;width:88px;padding-right:0px;height:27px;line-height:29px;background:#ffffff;"><span class="n">CD</span><span class="z">云科斯</span></div>
<div class="c" style="left:218px;top:471px;width:85px;padding-right:0px;height:27px;line-height:29px;background:#ffffff;"><span style="color:#ff0000"><span class="n">1-6</span></span><span class="n">(1-3)</span></div>
<div class="c" style="left:304px;top:471px;width:38px;padding-right:0px;height:27px;line-height:29px;background:#ffffff;"><span class="n">1-5</span></div>
<div class="c" style="left:343px;top:471px;width:88px;padding-right:0px;height:27px;line-height:29px;background:#ffffff;"><span style="color:#007400"><span class="z">巴列卡诺</span></span></div>
<div class="c" style="left:432px;top:471px;width:38px;padding-right:0px;height:27px;line-height:29px;background:#fdf9f5;"><span class="n">0.98</span></div>
<div class="c" style="left:471px;top:471px;width:78px;padding-right:0px;height:27px;line-height:29px;background:#fdf9f5;"><span style="color:#ff0000"><span class="n">*</span></span><span class="z">五球</span></div>
<div class="c" style="left:550px;top:471px;width:38px;padding-right:0px;height:27px;line-height:29px;background:#fdf9f5;"><span class="n">0.78</span></div>
<div class="c" style="left:589px;top:471px;width:60px;padding-right:0px;height:27px;line-height:29px;background:#f0f7fc;"><span class="n">60.26</span></div>
<div class="c" style="left:650px;top:471px;width:61px;padding-right:0px;height:27px;line-height:29px;background:#f0f7fc;"><span class="n">23.40</span></div>
<div class="c" style="left:712px;top:471px;width:62px;padding-right:0px;height:27px;line-height:29px;background:#f0f7fc;"><span class="n">1.01</span></div>
<div class="c" style="left:775px;top:471px;width:36px;padding-right:1px;height:27px;line-height:29px;background:#ffffff;color:#ff0000;-webkit-text-stroke:0.15px currentColor;"><span class="z">勝</span></div>
<div class="c" style="left:813px;top:471px;width:36px;padding-right:1px;height:27px;line-height:29px;background:#ffffff;color:#0000ff;-webkit-text-stroke:0.15px currentColor;"><span class="z">走</span></div>
<div class="c" style="left:851px;top:471px;width:56px;padding-right:0px;height:27px;line-height:29px;background:#ffffff;color:#ff0000;-webkit-text-stroke:0.15px currentColor;"><span class="z">大</span></div>
<div class="c ty" style="left:0px;top:499px;width:52px;padding-right:1px;height:27px;line-height:29px;background:#006530;color:#ffffff;"><span class="z">西甲</span></div>
<div class="c" style="left:54px;top:499px;width:74px;padding-right:0px;height:27px;line-height:29px;background:#f0f0f0;"><span class="n">25-10-27</span></div>
<div class="c" style="left:129px;top:499px;width:88px;padding-right:0px;height:27px;line-height:29px;background:#f0f0f0;"><span style="color:#007400"><span class="z">巴列卡诺</span></span></div>
<div class="c" style="left:218px;top:499px;width:85px;padding-right:0px;height:27px;line-height:29px;background:#f0f0f0;"><span style="color:#ff0000"><span class="n">1-0</span></span><span class="n">(0-0)</span></div>
<div class="c" style="left:304px;top:499px;width:38px;padding-right:0px;height:27px;line-height:29px;background:#f0f0f0;"><span class="n">7-5</span></div>
<div class="c" style="left:343px;top:499px;width:88px;padding-right:0px;height:27px;line-height:29px;background:#f0f0f0;"><span class="z">阿拉维斯</span></div>
<div class="c" style="left:432px;top:499px;width:38px;padding-right:0px;height:27px;line-height:29px;background:#fdf9f5;"><span class="n">0.97</span></div>
<div class="c" style="left:471px;top:499px;width:78px;padding-right:0px;height:27px;line-height:29px;background:#fdf9f5;"><span class="z">平</span><span class="n">/</span><span class="z">半</span></div>
<div class="c" style="left:550px;top:499px;width:38px;padding-right:0px;height:27px;line-height:29px;background:#fdf9f5;"><span class="n">0.91</span></div>
<div class="c" style="left:589px;top:499px;width:60px;padding-right:0px;height:27px;line-height:29px;background:#f0f7fc;"><span class="n">2.19</span></div>
<div class="c" style="left:650px;top:499px;width:61px;padding-right:0px;height:27px;line-height:29px;background:#f0f7fc;"><span class="n">3.02</span></div>
<div class="c" style="left:712px;top:499px;width:62px;padding-right:0px;height:27px;line-height:29px;background:#f0f7fc;"><span class="n">3.77</span></div>
<div class="c" style="left:775px;top:499px;width:36px;padding-right:1px;height:27px;line-height:29px;background:#f0f0f0;color:#ff0000;-webkit-text-stroke:0.15px currentColor;"><span class="z">勝</span></div>
<div class="c" style="left:813px;top:499px;width:36px;padding-right:1px;height:27px;line-height:29px;background:#f0f0f0;color:#ff0000;-webkit-text-stroke:0.15px currentColor;"><span class="z">贏</span></div>
<div class="c" style="left:851px;top:499px;width:56px;padding-right:0px;height:27px;line-height:29px;background:#f0f0f0;color:#007400;-webkit-text-stroke:0.15px currentColor;"><span class="z">小</span></div>
<div class="c ty" style="left:0px;top:527px;width:52px;padding-right:1px;height:27px;line-height:29px;background:#cc70d8;color:#ffffff;"><span class="z">欧会杯</span></div>
<div class="c" style="left:54px;top:527px;width:74px;padding-right:0px;height:27px;line-height:29px;background:#ffffff;"><span class="n">25-10-24</span></div>
<div class="c" style="left:129px;top:527px;width:88px;padding-right:0px;height:27px;line-height:29px;background:#ffffff;"><span class="z">赫根</span><span class="n">(</span><span class="z">中</span><span class="n">)</span></div>
<div class="c" style="left:218px;top:527px;width:85px;padding-right:0px;height:27px;line-height:29px;background:#ffffff;"><span style="color:#ff0000"><span class="n">2-2</span></span><span class="n">(1-1)</span></div>
<div class="c" style="left:304px;top:527px;width:38px;padding-right:0px;height:27px;line-height:29px;background:#ffffff;"><span class="n">10-5</span></div>
<div class="c" style="left:343px;top:527px;width:88px;padding-right:0px;height:27px;line-height:29px;background:#ffffff;"><span style="color:#007400"><span class="z">巴列卡诺</span></span></div>
<div class="c" style="left:432px;top:527px;width:38px;padding-right:0px;height:27px;line-height:29px;background:#fdf9f5;"><span class="n">0.83</span></div>
<div class="c" style="left:471px;top:527px;width:78px;padding-right:0px;height:27px;line-height:29px;background:#fdf9f5;"><span style="color:#ff0000"><span class="n">*</span></span><span class="z">半</span><span class="n">/</span><span class="z">一</span></div>
<div class="c" style="left:550px;top:527px;width:38px;padding-right:0px;height:27px;line-height:29px;background:#fdf9f5;"><span class="n">1.05</span></div>
<div class="c" style="left:589px;top:527px;width:60px;padding-right:0px;height:27px;line-height:29px;background:#f0f7fc;"><span class="n">4.10</span></div>
<div class="c" style="left:650px;top:527px;width:61px;padding-right:0px;height:27px;line-height:29px;background:#f0f7fc;"><span class="n">3.72</span></div>
<div class="c" style="left:712px;top:527px;width:62px;padding-right:0px;height:27px;line-height:29px;background:#f0f7fc;"><span class="n">1.80</span></div>
<div class="c" style="left:775px;top:527px;width:36px;padding-right:1px;height:27px;line-height:29px;background:#ffffff;color:#0000ff;-webkit-text-stroke:0.15px currentColor;"><span class="z">平</span></div>
<div class="c" style="left:813px;top:527px;width:36px;padding-right:1px;height:27px;line-height:29px;background:#ffffff;color:#007400;-webkit-text-stroke:0.15px currentColor;"><span class="z">輸</span></div>
<div class="c" style="left:851px;top:527px;width:56px;padding-right:0px;height:27px;line-height:29px;background:#ffffff;color:#ff0000;-webkit-text-stroke:0.15px currentColor;"><span class="z">大</span></div>
<div class="c ty" style="left:0px;top:555px;width:52px;padding-right:1px;height:27px;line-height:29px;background:#006530;color:#ffffff;"><span class="z">西甲</span></div>
<div class="c" style="left:54px;top:555px;width:74px;padding-right:0px;height:27px;line-height:29px;background:#f0f0f0;"><span class="n">25-10-20</span></div>
<div class="c" style="left:129px;top:555px;width:88px;padding-right:0px;height:27px;line-height:29px;background:#f0f0f0;"><span class="z">利云特</span></div>
<div class="c" style="left:218px;top:555px;width:85px;padding-right:0px;height:27px;line-height:29px;background:#f0f0f0;"><span style="color:#ff0000"><span class="n">0-3</span></span><span class="n">(0-2)</span></div>
<div class="c" style="left:304px;top:555px;width:38px;padding-right:0px;height:27px;line-height:29px;background:#f0f0f0;"><span class="n">11-4</span></div>
<div class="c" style="left:343px;top:555px;width:88px;padding-right:0px;height:27px;line-height:29px;background:#f0f0f0;"><span style="color:#007400"><span class="z">巴列卡诺</span></span></div>
<div class="c" style="left:432px;top:555px;width:38px;padding-right:0px;height:27px;line-height:29px;background:#fdf9f5;"><span class="n">0.93</span></div>
<div class="c" style="left:471px;top:555px;width:78px;padding-right:0px;height:27px;line-height:29px;background:#fdf9f5;"><span class="z">平手</span></div>
<div class="c" style="left:550px;top:555px;width:38px;padding-right:0px;height:27px;line-height:29px;background:#fdf9f5;"><span class="n">0.95</span></div>
<div class="c" style="left:589px;top:555px;width:60px;padding-right:0px;height:27px;line-height:29px;background:#f0f7fc;"><span class="n">2.66</span></div>
<div class="c" style="left:650px;top:555px;width:61px;padding-right:0px;height:27px;line-height:29px;background:#f0f7fc;"><span class="n">3.29</span></div>
<div class="c" style="left:712px;top:555px;width:62px;padding-right:0px;height:27px;line-height:29px;background:#f0f7fc;"><span class="n">2.68</span></div>
<div class="c" style="left:775px;top:555px;width:36px;padding-right:1px;height:27px;line-height:29px;background:#f0f0f0;color:#ff0000;-webkit-text-stroke:0.15px currentColor;"><span class="z">勝</span></div>
<div class="c" style="left:813px;top:555px;width:36px;padding-right:1px;height:27px;line-height:29px;background:#f0f0f0;color:#ff0000;-webkit-text-stroke:0.15px currentColor;"><span class="z">贏</span></div>
<div class="c" style="left:851px;top:555px;width:56px;padding-right:0px;height:27px;line-height:29px;background:#f0f0f0;color:#ff0000;-webkit-text-stroke:0.15px currentColor;"><span class="z">大</span></div>
<div class="c ty" style="left:0px;top:583px;width:52px;padding-right:1px;height:27px;line-height:29px;background:#006530;color:#ffffff;"><span class="z">西甲</span></div>
<div class="c" style="left:54px;top:583px;width:74px;padding-right:0px;height:27px;line-height:29px;background:#ffffff;"><span class="n">25-10-06</span></div>
<div class="c" style="left:129px;top:583px;width:88px;padding-right:0px;height:27px;line-height:29px;background:#ffffff;"><span class="z">皇家苏斯达</span></div>
<div class="c" style="left:218px;top:583px;width:85px;padding-right:0px;height:27px;line-height:29px;background:#ffffff;"><span style="color:#ff0000"><span class="n">0-1</span></span><span class="n">(0-0)</span></div>
<div class="c" style="left:304px;top:583px;width:38px;padding-right:0px;height:27px;line-height:29px;background:#ffffff;"><span class="n">7-5</span></div>
<div class="c" style="left:343px;top:583px;width:88px;padding-right:0px;height:27px;line-height:29px;background:#ffffff;"><span style="color:#007400"><span class="z">巴列卡诺</span></span></div>
<div class="c" style="left:432px;top:583px;width:38px;padding-right:0px;height:27px;line-height:29px;background:#fdf9f5;"><span class="n">0.90</span></div>
<div class="c" style="left:471px;top:583px;width:78px;padding-right:0px;height:27px;line-height:29px;background:#fdf9f5;"><span class="z">平</span><span class="n">/</span><span class="z">半</span></div>
<div class="c" style="left:550px;top:583px;width:38px;padding-right:0px;height:27px;line-height:29px;background:#fdf9f5;"><span class="n">0.98</span></div>
<div class="c" style="left:589px;top:583px;width:60px;padding-right:0px;height:27px;line-height:29px;background:#f0f7fc;"><span class="n">2.13</span></div>
<div class="c" style="left:650px;top:583px;width:61px;padding-right:0px;height:27px;line-height:29px;background:#f0f7fc;"><span class="n">3.35</span></div>
<div class="c" style="left:712px;top:583px;width:62px;padding-right:0px;height:27px;line-height:29px;background:#f0f7fc;"><span class="n">3.50</span></div>
<div class="c" style="left:775px;top:583px;width:36px;padding-right:1px;height:27px;line-height:29px;background:#ffffff;color:#ff0000;-webkit-text-stroke:0.15px currentColor;"><span class="z">勝</span></div>
<div class="c" style="left:813px;top:583px;width:36px;padding-right:1px;height:27px;line-height:29px;background:#ffffff;color:#ff0000;-webkit-text-stroke:0.15px currentColor;"><span class="z">贏</span></div>
<div class="c" style="left:851px;top:583px;width:56px;padding-right:0px;height:27px;line-height:29px;background:#ffffff;color:#007400;-webkit-text-stroke:0.15px currentColor;"><span class="z">小</span></div>
<div class="c ty" style="left:0px;top:611px;width:52px;padding-right:1px;height:27px;line-height:29px;background:#cc70d8;color:#ffffff;"><span class="z">欧会杯</span></div>
<div class="c" style="left:54px;top:611px;width:74px;padding-right:0px;height:27px;line-height:29px;background:#f0f0f0;"><span class="n">25-10-03</span></div>
<div class="c" style="left:129px;top:611px;width:88px;padding-right:0px;height:27px;line-height:29px;background:#f0f0f0;"><span style="color:#007400"><span class="z">巴列卡诺</span></span></div>
<div class="c" style="left:218px;top:611px;width:85px;padding-right:0px;height:27px;line-height:29px;background:#f0f0f0;"><span style="color:#ff0000"><span class="n">2-0</span></span><span class="n">(2-0)</span></div>
<div class="c" style="left:304px;top:611px;width:38px;padding-right:0px;height:27px;line-height:29px;background:#f0f0f0;"><span class="n">12-0</span></div>
<div class="c" style="left:343px;top:611px;width:88px;padding-right:0px;height:27px;line-height:29px;background:#f0f0f0;"><span class="z">斯肯迪加</span></div>
<div class="c" style="left:432px;top:611px;width:38px;padding-right:0px;height:27px;line-height:29px;background:#fdf9f5;"><span class="n">1.00</span></div>
<div class="c" style="left:471px;top:611px;width:78px;padding-right:0px;height:27px;line-height:29px;background:#fdf9f5;"><span class="z">两</span><span class="n">/</span><span class="z">两球半</span></div>
<div class="c" style="left:550px;top:611px;width:38px;padding-right:0px;height:27px;line-height:29px;background:#fdf9f5;"><span class="n">0.88</span></div>
<div class="c" style="left:589px;top:611px;width:60px;padding-right:0px;height:27px;line-height:29px;background:#f0f7fc;"><span class="n">1.13</span></div>
<div class="c" style="left:650px;top:611px;width:61px;padding-right:0px;height:27px;line-height:29px;background:#f0f7fc;"><span class="n">7.82</span></div>
<div class="c" style="left:712px;top:611px;width:62px;padding-right:0px;height:27px;line-height:29px;background:#f0f7fc;"><span class="n">21.73</span></div>
<div class="c" style="left:775px;top:611px;width:36px;padding-right:1px;height:27px;line-height:29px;background:#f0f0f0;color:#ff0000;-webkit-text-stroke:0.15px currentColor;"><span class="z">勝</span></div>
<div class="c" style="left:813px;top:611px;width:36px;padding-right:1px;height:27px;line-height:29px;background:#f0f0f0;color:#007400;-webkit-text-stroke:0.15px currentColor;"><span class="z">輸</span></div>
<div class="c" style="left:851px;top:611px;width:56px;padding-right:0px;height:27px;line-height:29px;background:#f0f0f0;color:#007400;-webkit-text-stroke:0.15px currentColor;"><span class="z">小</span></div>
<div class="c ty" style="left:0px;top:639px;width:52px;padding-right:1px;height:27px;line-height:29px;background:#006530;color:#ffffff;"><span class="z">西甲</span></div>
<div class="c" style="left:54px;top:639px;width:74px;padding-right:0px;height:27px;line-height:29px;background:#ffffff;"><span class="n">25-09-28</span></div>
<div class="c" style="left:129px;top:639px;width:88px;padding-right:0px;height:27px;line-height:29px;background:#ffffff;"><span class="rc"><span class="n">1</span></span><span style="color:#007400"><span class="z">巴列卡诺</span></span></div>
<div class="c" style="left:218px;top:639px;width:85px;padding-right:0px;height:27px;line-height:29px;background:#ffffff;"><span style="color:#ff0000"><span class="n">0-1</span></span><span class="n">(0-0)</span></div>
<div class="c" style="left:304px;top:639px;width:38px;padding-right:0px;height:27px;line-height:29px;background:#ffffff;"><span class="n">12-4</span></div>
<div class="c" style="left:343px;top:639px;width:88px;padding-right:0px;height:27px;line-height:29px;background:#ffffff;"><span class="z">塞维利亚</span></div>
<div class="c" style="left:432px;top:639px;width:38px;padding-right:0px;height:27px;line-height:29px;background:#fdf9f5;"><span class="n">1.00</span></div>
<div class="c" style="left:471px;top:639px;width:78px;padding-right:0px;height:27px;line-height:29px;background:#fdf9f5;"><span class="z">半球</span></div>
<div class="c" style="left:550px;top:639px;width:38px;padding-right:0px;height:27px;line-height:29px;background:#fdf9f5;"><span class="n">0.88</span></div>
<div class="c" style="left:589px;top:639px;width:60px;padding-right:0px;height:27px;line-height:29px;background:#f0f7fc;"><span class="n">2.01</span></div>
<div class="c" style="left:650px;top:639px;width:61px;padding-right:0px;height:27px;line-height:29px;background:#f0f7fc;"><span class="n">3.34</span></div>
<div class="c" style="left:712px;top:639px;width:62px;padding-right:0px;height:27px;line-height:29px;background:#f0f7fc;"><span class="n">3.92</span></div>
<div class="c" style="left:775px;top:639px;width:36px;padding-right:1px;height:27px;line-height:29px;background:#ffffff;color:#007400;-webkit-text-stroke:0.15px currentColor;"><span class="z">負</span></div>
<div class="c" style="left:813px;top:639px;width:36px;padding-right:1px;height:27px;line-height:29px;background:#ffffff;color:#007400;-webkit-text-stroke:0.15px currentColor;"><span class="z">輸</span></div>
<div class="c" style="left:851px;top:639px;width:56px;padding-right:0px;height:27px;line-height:29px;background:#ffffff;color:#007400;-webkit-text-stroke:0.15px currentColor;"><span class="z">小</span></div>
<div class="c ty" style="left:0px;top:667px;width:52px;padding-right:1px;height:27px;line-height:29px;background:#006530;color:#ffffff;"><span class="z">西甲</span></div>
<div class="c" style="left:54px;top:667px;width:74px;padding-right:0px;height:27px;line-height:29px;background:#f0f0f0;"><span class="n">25-09-25</span></div>
<div class="c" style="left:129px;top:667px;width:88px;padding-right:0px;height:27px;line-height:29px;background:#f0f0f0;"><span class="z">马德里竞技</span></div>
<div class="c" style="left:218px;top:667px;width:85px;padding-right:0px;height:27px;line-height:29px;background:#f0f0f0;"><span style="color:#ff0000"><span class="n">3-2</span></span><span class="n">(1-1)</span></div>
<div class="c" style="left:304px;top:667px;width:38px;padding-right:0px;height:27px;line-height:29px;background:#f0f0f0;"><span class="n">8-6</span></div>
<div class="c" style="left:343px;top:667px;width:88px;padding-right:0px;height:27px;line-height:29px;background:#f0f0f0;"><span style="color:#007400"><span class="z">巴列卡诺</span></span></div>
<div class="c" style="left:432px;top:667px;width:38px;padding-right:0px;height:27px;line-height:29px;background:#fdf9f5;"><span class="n">1.04</span></div>
<div class="c" style="left:471px;top:667px;width:78px;padding-right:0px;height:27px;line-height:29px;background:#fdf9f5;"><span class="z">一</span><span class="n">/</span><span class="z">球半</span></div>
<div class="c" style="left:550px;top:667px;width:38px;padding-right:0px;height:27px;line-height:29px;background:#fdf9f5;"><span class="n">0.84</span></div>
<div class="c" style="left:589px;top:667px;width:60px;padding-right:0px;height:27px;line-height:29px;background:#f0f7fc;"><span class="n">1.48</span></div>
<div class="c" style="left:650px;top:667px;width:61px;padding-right:0px;height:27px;line-height:29px;background:#f0f7fc;"><span class="n">4.34</span></div>
<div class="c" style="left:712px;top:667px;width:62px;padding-right:0px;height:27px;line-height:29px;background:#f0f7fc;"><span class="n">6.89</span></div>
<div class="c" style="left:775px;top:667px;width:36px;padding-right:1px;height:27px;line-height:29px;background:#f0f0f0;color:#007400;-webkit-text-stroke:0.15px currentColor;"><span class="z">負</span></div>
<div class="c" style="left:813px;top:667px;width:36px;padding-right:1px;height:27px;line-height:29px;background:#f0f0f0;color:#ff0000;-webkit-text-stroke:0.15px currentColor;"><span class="z">贏</span></div>
<div class="c" style="left:851px;top:667px;width:56px;padding-right:0px;height:27px;line-height:29px;background:#f0f0f0;color:#ff0000;-webkit-text-stroke:0.15px currentColor;"><span class="z">大</span></div>
<div class="c ty" style="left:0px;top:695px;width:52px;padding-right:1px;height:27px;line-height:29px;background:#006530;color:#ffffff;"><span class="z">西甲</span></div>
<div class="c" style="left:54px;top:695px;width:74px;padding-right:0px;height:27px;line-height:29px;background:#ffffff;"><span class="n">25-09-21</span></div>
<div class="c" style="left:129px;top:695px;width:88px;padding-right:0px;height:27px;line-height:29px;background:#ffffff;"><span style="color:#007400"><span class="z">巴列卡诺</span></span></div>
<div class="c" style="left:218px;top:695px;width:85px;padding-right:0px;height:27px;line-height:29px;background:#ffffff;"><span style="color:#ff0000"><span class="n">1-1</span></span><span class="n">(0-0)</span></div>
<div class="c" style="left:304px;top:695px;width:38px;padding-right:0px;height:27px;line-height:29px;background:#ffffff;"><span class="n">5-7</span></div>
<div class="c" style="left:343px;top:695px;width:88px;padding-right:0px;height:27px;line-height:29px;background:#ffffff;"><span class="z">维戈塞尔塔</span></div>
<div class="c" style="left:432px;top:695px;width:38px;padding-right:0px;height:27px;line-height:29px;background:#fdf9f5;"><span class="n">1.01</span></div>
<div class="c" style="left:471px;top:695px;width:78px;padding-right:0px;height:27px;line-height:29px;background:#fdf9f5;"><span class="z">半球</span></div>
<div class="c" style="left:550px;top:695px;width:38px;padding-right:0px;height:27px;line-height:29px;background:#fdf9f5;"><span class="n">0.87</span></div>
<div class="c" style="left:589px;top:695px;width:60px;padding-right:0px;height:27px;line-height:29px;background:#f0f7fc;"><span class="n">2.16</span></div>
<div class="c" style="left:650px;top:695px;width:61px;padding-right:0px;height:27px;line-height:29px;background:#f0f7fc;"><span class="n">3.33</span></div>
<div class="c" style="left:712px;top:695px;width:62px;padding-right:0px;height:27px;line-height:29px;background:#f0f7fc;"><span class="n">3.50</span></div>
<div class="c" style="left:775px;top:695px;width:36px;padding-right:1px;height:27px;line-height:29px;background:#ffffff;color:#0000ff;-webkit-text-stroke:0.15px currentColor;"><span class="z">平</span></div>
<div class="c" style="left:813px;top:695px;width:36px;padding-right:1px;height:27px;line-height:29px;background:#ffffff;color:#007400;-webkit-text-stroke:0.15px currentColor;"><span class="z">輸</span></div>
<div class="c" style="left:851px;top:695px;width:56px;padding-right:0px;height:27px;line-height:29px;background:#ffffff;color:#007400;-webkit-text-stroke:0.15px currentColor;"><span class="z">小</span></div>
<div class="c ty" style="left:0px;top:723px;width:52px;padding-right:1px;height:27px;line-height:29px;background:#006530;color:#ffffff;"><span class="z">西甲</span></div>
<div class="c" style="left:54px;top:723px;width:74px;padding-right:0px;height:27px;line-height:29px;background:#f0f0f0;"><span class="n">25-09-15</span></div>
<div class="c" style="left:129px;top:723px;width:88px;padding-right:0px;height:27px;line-height:29px;background:#f0f0f0;"><span class="z">奥萨苏纳</span></div>
<div class="c" style="left:218px;top:723px;width:85px;padding-right:0px;height:27px;line-height:29px;background:#f0f0f0;"><span style="color:#ff0000"><span class="n">2-0</span></span><span class="n">(1-0)</span></div>
<div class="c" style="left:304px;top:723px;width:38px;padding-right:0px;height:27px;line-height:29px;background:#f0f0f0;"><span class="n">3-6</span></div>
<div class="c" style="left:343px;top:723px;width:88px;padding-right:0px;height:27px;line-height:29px;background:#f0f0f0;"><span style="color:#007400"><span class="z">巴列卡诺</span></span></div>
<div class="c" style="left:432px;top:723px;width:38px;padding-right:0px;height:27px;line-height:29px;background:#fdf9f5;"><span class="n">0.92</span></div>
<div class="c" style="left:471px;top:723px;width:78px;padding-right:0px;height:27px;line-height:29px;background:#fdf9f5;"><span class="z">平手</span></div>
<div class="c" style="left:550px;top:723px;width:38px;padding-right:0px;height:27px;line-height:29px;background:#fdf9f5;"><span class="n">0.97</span></div>
<div class="c" style="left:589px;top:723px;width:60px;padding-right:0px;height:27px;line-height:29px;background:#f0f7fc;"><span class="n">2.70</span></div>
<div class="c" style="left:650px;top:723px;width:61px;padding-right:0px;height:27px;line-height:29px;background:#f0f7fc;"><span class="n">2.97</span></div>
<div class="c" style="left:712px;top:723px;width:62px;padding-right:0px;height:27px;line-height:29px;background:#f0f7fc;"><span class="n">2.90</span></div>
<div class="c" style="left:775px;top:723px;width:36px;padding-right:1px;height:27px;line-height:29px;background:#f0f0f0;color:#007400;-webkit-text-stroke:0.15px currentColor;"><span class="z">負</span></div>
<div class="c" style="left:813px;top:723px;width:36px;padding-right:1px;height:27px;line-height:29px;background:#f0f0f0;color:#007400;-webkit-text-stroke:0.15px currentColor;"><span class="z">輸</span></div>
<div class="c" style="left:851px;top:723px;width:56px;padding-right:0px;height:27px;line-height:29px;background:#f0f0f0;color:#0000ff;-webkit-text-stroke:0.15px currentColor;"><span class="z">走</span></div>
<div class="a" style="left:907px;top:751px;width:1px;height:2px;background:#bfbfbf"></div>
</body></html>
